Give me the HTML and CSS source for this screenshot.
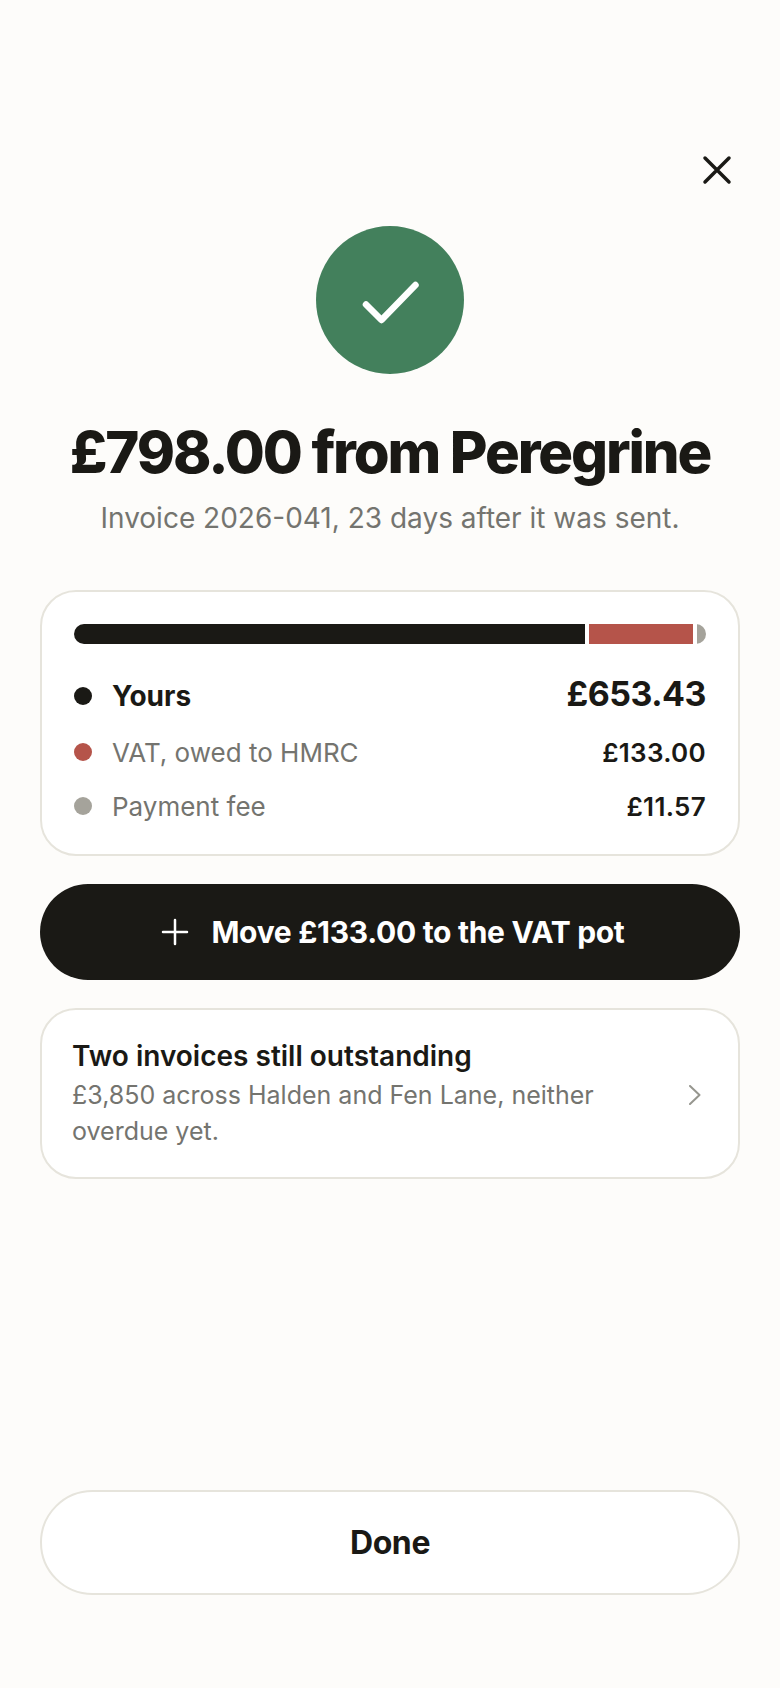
FILE: index.html
```html
<!DOCTYPE html>
<html>
<head>
    <title>Payment received</title>
    <link rel="stylesheet" href="styles.css">
</head>
<body>
    <div class="page">
        <div class="top-row">
            <button class="close" aria-label="Close">
                <svg width="32" height="32" viewBox="0 0 32 32"><path d="M4 4L28 28M28 4L4 28"/></svg>
            </button>
        </div>

        <div class="tick">
            <svg width="148" height="148" viewBox="0 0 148 148"><path d="M50 78.5L65.5 94L99.5 59"/></svg>
        </div>

        <h1>£798.00 from Peregrine</h1>
        <p class="subtitle">Invoice 2026-041, 23 days after it was sent.</p>

        <div class="card split">
            <div class="bar">
                <span class="seg seg-yours" style="flex-grow: 653.43"></span>
                <span class="seg seg-vat" style="flex-grow: 133"></span>
                <span class="seg seg-fee" style="flex-grow: 11.57"></span>
            </div>
            <div class="row row-main">
                <span class="dot dot-yours"></span>
                <span class="label">Yours</span>
                <span class="amount">£653.43</span>
            </div>
            <div class="row">
                <span class="dot dot-vat"></span>
                <span class="label">VAT, owed to HMRC</span>
                <span class="amount">£133.00</span>
            </div>
            <div class="row">
                <span class="dot dot-fee"></span>
                <span class="label">Payment fee</span>
                <span class="amount">£11.57</span>
            </div>
        </div>

        <button class="button primary">
            <svg width="28" height="28" viewBox="0 0 28 28"><path d="M14 2V26M2 14H26"/></svg>
            Move £133.00 to the VAT pot
        </button>

        <div class="card outstanding">
            <div class="outstanding-text">
                <div class="outstanding-title">Two invoices still outstanding</div>
                <div class="outstanding-sub">£3,850 across Halden and Fen Lane, neither overdue yet.</div>
            </div>
            <svg class="chevron" width="12" height="20" viewBox="0 0 12 20"><path d="M1 1L10.5 10L1 19"/></svg>
        </div>

        <button class="button done">Done</button>
    </div>
</body>
</html>
```

FILE: styles.css
```css
* {
    box-sizing: border-box;
}

body {
    margin: 0;
    font-family: Inter, "Liberation Sans", sans-serif;
    background-color: #fdfcfa;
    color: #1a1915;
}

.page {
    display: flex;
    flex-direction: column;
    height: 1688px;
    padding: 154px 40px 93px;
}

.top-row {
    display: flex;
    justify-content: flex-end;
    padding-right: 7px;
}

.close {
    display: flex;
    padding: 0;
    border: none;
    background: none;
}

.close path {
    fill: none;
    stroke: #1a1915;
    stroke-width: 3.5;
    stroke-linecap: round;
}

.tick {
    align-self: center;
    width: 148px;
    height: 148px;
    margin-top: 40px;
    border-radius: 50%;
    background-color: #43805c;
}

.tick path {
    fill: none;
    stroke: #fff;
    stroke-width: 6.5;
    stroke-linecap: round;
    stroke-linejoin: round;
}

h1 {
    margin: 44px 0 0;
    font-size: 58px;
    line-height: 68px;
    font-weight: 800;
    letter-spacing: -2.1px;
    text-align: center;
}

.subtitle {
    margin: 12px 0 0;
    font-size: 28px;
    line-height: 40px;
    color: #74746f;
    text-align: center;
}

.card {
    border: 2px solid #e6e4dc;
    border-radius: 36px;
    background-color: #fff;
}

.split {
    margin-top: 52px;
    padding: 32px 32px 21px;
}

.bar {
    display: flex;
    gap: 4px;
    height: 20px;
    margin-bottom: 22px;
    border-radius: 10px;
    overflow: hidden;
}

.seg {
    flex-basis: 0;
}

.seg-yours, .dot-yours {
    background-color: #1a1915;
}

.seg-vat, .dot-vat {
    background-color: #b5544a;
}

.seg-fee, .dot-fee {
    background-color: #a5a39b;
}

.row {
    display: flex;
    align-items: center;
    height: 54px;
    font-size: 26px;
}

.row-main {
    height: 59px;
    font-size: 28px;
}

.dot {
    width: 18px;
    height: 18px;
    margin-right: 20px;
    border-radius: 50%;
}

.label {
    flex: 1;
    color: #74746f;
}

.amount {
    font-weight: 600;
    letter-spacing: 0.3px;
}

.row-main .label {
    font-weight: 700;
    color: #1a1915;
}

.row-main .amount {
    margin-bottom: 4px;
    font-size: 34px;
    font-weight: 700;
    letter-spacing: -0.5px;
}

.button {
    display: flex;
    align-items: center;
    justify-content: center;
    font-family: inherit;
    font-weight: 700;
    border-radius: 53px;
}

.primary {
    gap: 22px;
    height: 96px;
    margin-top: 28px;
    padding: 0 0 0 6px;
    border: none;
    background-color: #1a1915;
    color: #fff;
    font-size: 30px;
    letter-spacing: -0.3px;
}

.primary path {
    fill: none;
    stroke: #fff;
    stroke-width: 2.5;
    stroke-linecap: round;
}

.outstanding {
    display: flex;
    align-items: center;
    gap: 24px;
    margin-top: 28px;
    padding: 28px 37px 28px 30px;
}

.outstanding-text {
    flex: 1;
}

.outstanding-title {
    font-size: 28px;
    line-height: 36px;
    font-weight: 600;
}

.outstanding-sub {
    margin-top: 3px;
    font-size: 25px;
    line-height: 36px;
    color: #74746f;
}

.chevron {
    margin-top: 2px;
}

.chevron path {
    fill: none;
    stroke: #96968f;
    stroke-width: 2;
    stroke-linecap: round;
    stroke-linejoin: round;
}

.done {
    height: 105px;
    margin-top: auto;
    border: 2px solid #e6e4dc;
    background-color: #fff;
    color: #1a1915;
    font-size: 32px;
    letter-spacing: -0.4px;
}
```
